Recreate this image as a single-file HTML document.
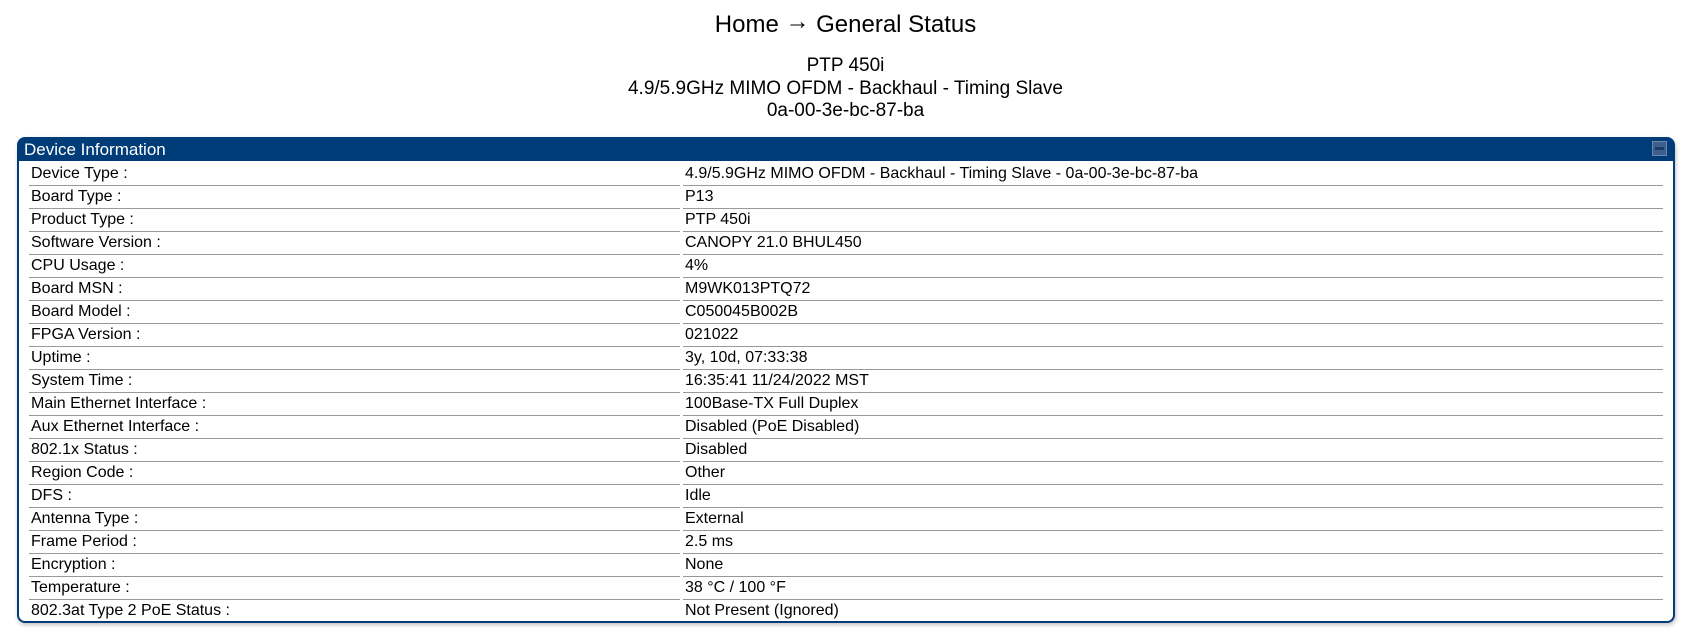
<!DOCTYPE html>
<html><head><meta charset="utf-8"><style>
html,body{margin:0;padding:0;background:#fff;width:1691px;height:637px;overflow:hidden;font-family:"Liberation Sans",Arial,sans-serif;color:#000}
.t{position:absolute;left:0;width:1691px;text-align:center}
#title{top:10px;font-size:24px;line-height:30px}
#title span{position:relative;top:-3px}
#sub{top:55px;font-size:19px;line-height:22.5px}
#panel{position:absolute;left:17px;top:137px;width:1654px;height:484px;border:2px solid #003c78;border-top:none;border-radius:10px 10px 8px 8px;box-shadow:1px 2px 4px rgba(0,0,0,.25);background:#fff}
#hdr{position:absolute;left:-2px;top:0;width:1658px;height:24px;background:#003c78;border-radius:8px 8px 0 0;color:#fff;font-size:17px;line-height:26px;text-indent:7px}
#btn{position:absolute;right:8px;top:4px;width:13px;height:13px;border:1px solid #6b86ad;background:#3d5f8e}
#btn:after{content:"";position:absolute;left:2px;top:5px;width:9px;height:3px;background:#1d3a66}
table{position:absolute;left:7px;top:26px;border-collapse:separate;border-spacing:3px 0;font-size:16px}
td{height:22px;border-bottom:1px solid #999;padding:0 0 0 2px;line-height:22px;white-space:nowrap}
tr:last-child td{border-bottom:none}
td.l{width:649px}td.v{width:978px}
</style></head><body>
<div class="t" id="title">Home <span>→</span> General Status</div>
<div class="t" id="sub">PTP 450i<br>4.9/5.9GHz MIMO OFDM - Backhaul - Timing Slave<br>0a-00-3e-bc-87-ba</div>
<div id="panel"><div id="hdr">Device Information<div id="btn"></div></div>
<table>
<tr><td class="l">Device Type :</td><td class="v">4.9/5.9GHz MIMO OFDM - Backhaul - Timing Slave - 0a-00-3e-bc-87-ba</td></tr>
<tr><td class="l">Board Type :</td><td class="v">P13</td></tr>
<tr><td class="l">Product Type :</td><td class="v">PTP 450i</td></tr>
<tr><td class="l">Software Version :</td><td class="v">CANOPY 21.0 BHUL450</td></tr>
<tr><td class="l">CPU Usage :</td><td class="v">4%</td></tr>
<tr><td class="l">Board MSN :</td><td class="v">M9WK013PTQ72</td></tr>
<tr><td class="l">Board Model :</td><td class="v">C050045B002B</td></tr>
<tr><td class="l">FPGA Version :</td><td class="v">021022</td></tr>
<tr><td class="l">Uptime :</td><td class="v">3y, 10d, 07:33:38</td></tr>
<tr><td class="l">System Time :</td><td class="v">16:35:41 11/24/2022 MST</td></tr>
<tr><td class="l">Main Ethernet Interface :</td><td class="v">100Base-TX Full Duplex</td></tr>
<tr><td class="l">Aux Ethernet Interface :</td><td class="v">Disabled (PoE Disabled)</td></tr>
<tr><td class="l">802.1x Status :</td><td class="v">Disabled</td></tr>
<tr><td class="l">Region Code :</td><td class="v">Other</td></tr>
<tr><td class="l">DFS :</td><td class="v">Idle</td></tr>
<tr><td class="l">Antenna Type :</td><td class="v">External</td></tr>
<tr><td class="l">Frame Period :</td><td class="v">2.5 ms</td></tr>
<tr><td class="l">Encryption :</td><td class="v">None</td></tr>
<tr><td class="l">Temperature :</td><td class="v">38 °C / 100 °F</td></tr>
<tr><td class="l">802.3at Type 2 PoE Status :</td><td class="v">Not Present (Ignored)</td></tr>
</table></div>
</body></html>
